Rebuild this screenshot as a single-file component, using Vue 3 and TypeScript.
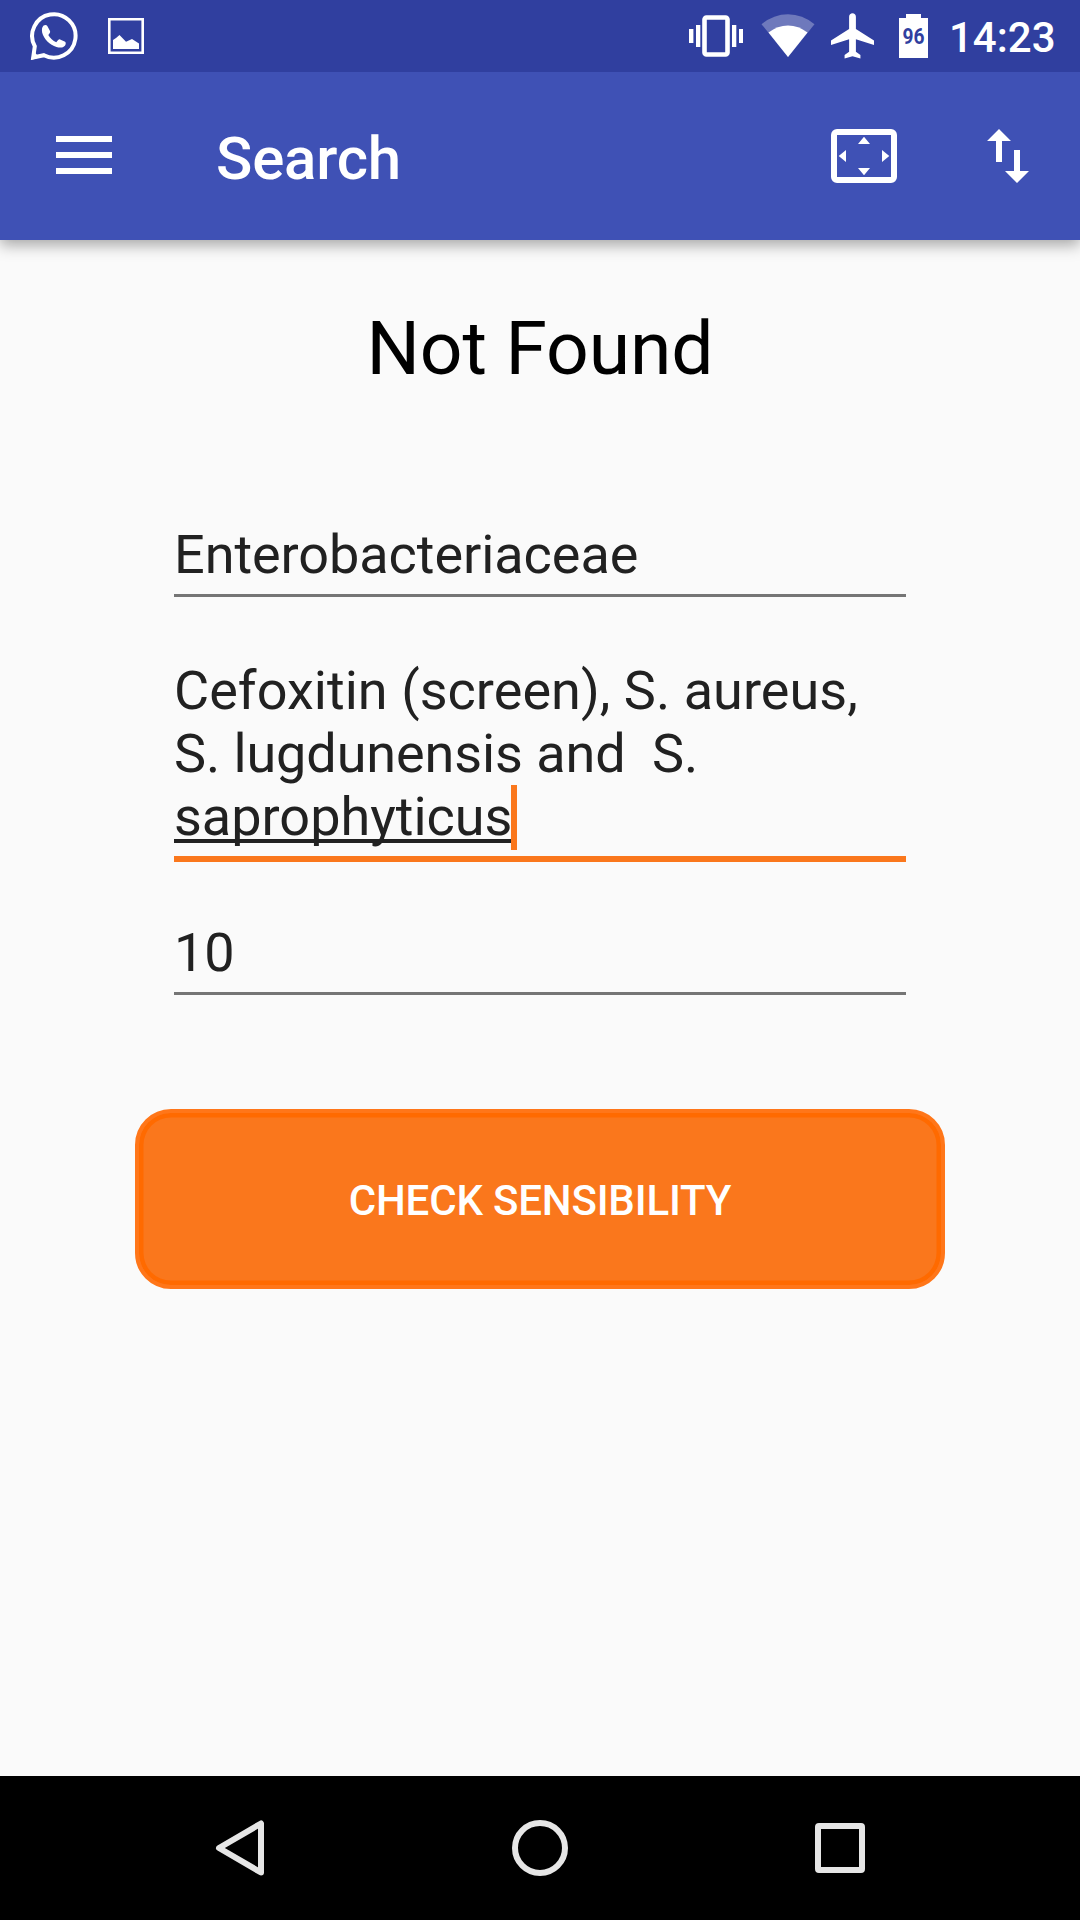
<script setup lang="ts">
import { ref } from 'vue'

const time = ref('14:23')
const battery = ref(96)
const title = ref('Search')
const result = ref('Not Found')
const organism = ref('Enterobacteriaceae')
const antibioticLines = ref(['Cefoxitin (screen), S. aureus,', 'S. lugdunensis and  S.'])
const composing = ref('saprophyticus')
const diameter = ref('10')
</script>

<template>
  <div class="screen">
    <header class="status">
      <svg class="whatsapp" width="48" height="48" viewBox="30 12 48 48">
        <path d="M34.8 46.3A21.7 21.7 0 1 1 43.9 55.2L33.2 57.5Z" fill="none" stroke="#fff" stroke-width="4" />
        <path d="M31 60l2.4-9 6 6.6z" fill="#fff" />
        <path d="M43.6 25.6c1.2-.9 3-.9 3.7.3l2.7 5c.4 1.200-.1 2.300-1.700 4 1.800 3.300 4.600 5.800 8 7.400 1.600-2.300 2.600-3.200 3.800-2.900l5 2.300c1 .5 .8 2.600-.2 4.100-2 2.300-5.400 2-8.400 1.200-6.700-2-12.700-8-14.300-14.300-.5-2.900-.4-5.500 1.400-7.100z" fill="#fff" />
      </svg>
      <svg class="photo" width="36" height="36" viewBox="108 18 36 36">
        <path d="M109.300 19.300h33.400v33.400h-33.400z" fill="none" stroke="#fff" stroke-width="2.600" />
        <path d="M113 49v-9l3-2 3.500-3 6.500 6.700 6-2.700 7 4.500V49z" fill="#fff" />
      </svg>
      <div class="spacer"></div>
      <svg class="vibrate" width="54" height="42" viewBox="689 15 54 42">
        <rect x="704.500" y="17.500" width="23" height="37" rx="2" fill="none" stroke="#fff" stroke-width="4.600" />
        <path d="M696 25h4.300v22H696zM689 29h4.400v14H689zM732 25h4.300v22H732zM739 29h4v14h-4z" fill="#fff" />
      </svg>
      <svg class="wifi" width="54" height="44" viewBox="760.500 14 54 44">
        <path d="M787.500 57L761 24.200Q773 14.200 787.500 14.200T814 24.200Z" fill="#fff" fill-opacity=".3" />
        <path d="M787.500 57L768 32.500Q777 25.500 787.500 25.500T807 32.500Z" fill="#fff" />
      </svg>
      <svg class="plane" width="43" height="46" viewBox="2 1.900 19 20.300">
        <path d="M21 16v-2l-8-5V3.500c0-.83-.67-1.500-1.500-1.500S10 2.670 10 3.500V9l-8 5v2l8-2.500V19l-2 1.500V22l3.500-1 3.500 1v-1.500L13 19v-5.500l8 2.500z" fill="#fff" />
      </svg>
      <svg class="battery" width="29" height="44" viewBox="899 14 29 44">
        <path d="M906 14h15v4h7v40h-29V18h7z" fill="#fff" />
        <text x="902.500" y="44" textLength="22" lengthAdjust="spacingAndGlyphs">{{ battery }}</text>
      </svg>
      <span class="clock">{{ time }}</span>
    </header>

    <nav class="toolbar">
      <svg class="menu" width="56" height="38" viewBox="0 0 56 38">
        <path d="M0 0h56v6H0zM0 16h56v6H0zM0 32h56v6H0z" fill="#fff" />
      </svg>
      <h1 class="title">{{ title }}</h1>
      <div class="spacer"></div>
      <svg class="overscan" width="66" height="54" viewBox="831 129 66 54">
        <rect x="834" y="132" width="60" height="48" rx="3" fill="none" stroke="#fff" stroke-width="6" />
        <path d="M864 136.700l6 7.300h-12zM864 175.300l-6-7.300h12zM838.700 156l7.300-6v12zM889.300 156l-7.300-6v12z" fill="#fff" />
      </svg>
      <svg class="swap" width="42" height="54" viewBox="987 129 42 54">
        <path d="M999 129l12 12h-9v21h-6v-21h-9zM1017 183l-12-12h9v-21h6v21h9z" fill="#fff" />
      </svg>
    </nav>

    <main class="content">
      <h2 class="result">{{ result }}</h2>
      <div class="field organism">{{ organism }}</div>
      <div class="field active">
        <div v-for="line in antibioticLines" :key="line" class="line">{{ line }}</div>
        <div class="last"><span class="composing">{{ composing }}</span><i class="caret"></i></div>
      </div>
      <div class="field">{{ diameter }}</div>
      <button class="check" type="button">CHECK SENSIBILITY</button>
    </main>

    <footer class="navbar">
      <svg width="56" height="56" viewBox="212 1820 56 56">
        <path d="M219 1848L261 1823.500V1872.500Z" />
      </svg>
      <svg width="56" height="56" viewBox="512 1820 56 56">
        <circle cx="540" cy="1848" r="25" />
      </svg>
      <svg width="56" height="56" viewBox="812 1820 56 56">
        <rect x="818" y="1826" width="44" height="44" rx="1" />
      </svg>
    </footer>
  </div>
</template>

<style>
body {
  margin: 0;
}
</style>

<style scoped>
.screen {
  width: 1080px;
  height: 1920px;
  display: flex;
  flex-direction: column;
  overflow: hidden;
  background: #fafafa;
  font-family: Roboto, "Noto Sans", sans-serif;
}
svg {
  display: block;
  flex: none;
}
.spacer {
  flex: 1;
}
.status {
  position: relative;
  z-index: 1;
  height: 72px;
  flex: none;
  display: flex;
  align-items: center;
  box-sizing: border-box;
  padding: 0 26px 0 30px;
  background: #303f9f;
}
.photo {
  margin-left: 30px;
}
.wifi {
  margin-left: 17.5px;
}
.plane {
  margin-left: 16.5px;
}
.battery {
  margin-left: 25px;
}
.battery text {
  font-size: 22px;
  font-weight: 700;
  fill: #303f9f;
}
.clock {
  width: 105px;
  margin-left: 21px;
  padding-top: 3px;
  font-size: 42px;
  font-weight: 500;
  line-height: 49px;
  color: #fff;
  white-space: nowrap;
}
.toolbar {
  height: 168px;
  flex: none;
  display: flex;
  align-items: center;
  box-sizing: border-box;
  padding: 0 51px 0 56px;
  background: #3f51b5;
  box-shadow: 0 5px 14px rgba(0, 0, 0, 0.34);
}
.menu {
  margin-bottom: 2px;
}
.title {
  margin: 6px 0 0 104px;
  font-size: 60px;
  font-weight: 500;
  line-height: 70px;
  letter-spacing: -0.2px;
  color: #fff;
}
.swap {
  margin-left: 90px;
}
.content {
  flex: 1;
  display: flex;
  flex-direction: column;
  align-items: center;
}
.result {
  margin: 64px 0 131px;
  font-size: 75px;
  font-weight: 400;
  line-height: 88px;
  letter-spacing: -0.1px;
  color: #000;
}
.field {
  width: 732px;
  padding-bottom: 8px;
  border-bottom: 3px solid #757575;
  font-size: 54px;
  line-height: 63px;
  color: #212121;
  white-space: pre;
}
.organism {
  letter-spacing: -0.06px;
}
.active {
  margin: 62px 0 59px;
  border-bottom: 6px solid #fa771c;
}
.line:nth-child(1) {
  letter-spacing: 0.04px;
}
.line:nth-child(2) {
  letter-spacing: -0.1px;
}
.last {
  display: flex;
}
.composing {
  text-decoration: underline;
  text-decoration-thickness: 3.500px;
  text-underline-offset: 4px;
  text-decoration-skip-ink: none;
}
.caret {
  width: 6px;
  height: 65px;
  margin: 0 0 -2px -1px;
  background: #fa771c;
}
.check {
  width: 810px;
  height: 180px;
  box-sizing: border-box;
  margin-top: 114px;
  padding: 3px 0 0;
  border: 4.500px solid #ff7619;
  border-radius: 36px;
  background: #fa771c;
  box-shadow: inset 0 0 0 4.500px #ff6a00;
  font-family: inherit;
  font-size: 42px;
  font-weight: 500;
  line-height: 49px;
  letter-spacing: -0.18px;
  color: #fff;
}
.navbar {
  height: 144px;
  flex: none;
  display: flex;
  align-items: center;
  justify-content: center;
  gap: 244px;
  background: #000;
}
.navbar svg {
  fill: none;
  stroke: #e6e6e6;
  stroke-width: 6px;
  stroke-linejoin: round;
}
</style>
